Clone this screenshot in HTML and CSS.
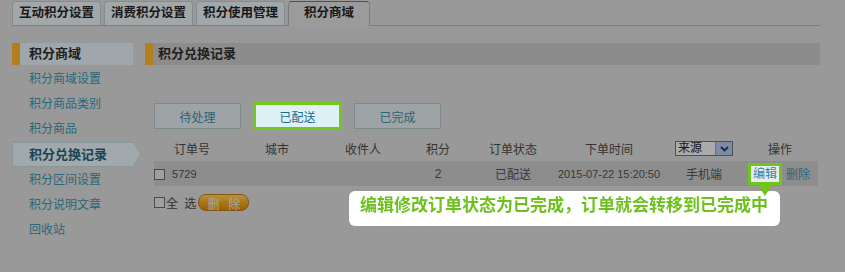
FILE: index.html
```html
<!DOCTYPE html>
<html>
<head>
    <title>积分商域 - 积分兑换记录</title>
    <link rel="stylesheet" href="styles.css">
</head>
<body>
    <div class="tabs">
        <a class="tab">互动积分设置</a>
        <a class="tab">消费积分设置</a>
        <a class="tab">积分使用管理</a>
        <a class="tab active">积分商域</a>
    </div>

    <div class="main">
        <div class="side">
            <div class="side-title">积分商域</div>
            <ul class="side-menu">
                <li><a>积分商域设置</a></li>
                <li><a>积分商品类别</a></li>
                <li><a>积分商品</a></li>
                <li class="current"><a>积分兑换记录</a></li>
                <li><a>积分区间设置</a></li>
                <li><a>积分说明文章</a></li>
                <li><a>回收站</a></li>
            </ul>
        </div>

        <div class="content">
            <div class="panel-title">积分兑换记录</div>

            <div class="status-tabs">
                <button class="status">待处理</button>
                <button class="status on hl">已配送</button>
                <button class="status">已完成</button>
            </div>

            <table class="orders">
                <colgroup>
                    <col style="width:76px"><col style="width:94px"><col style="width:78px"><col style="width:72px">
                    <col style="width:78px"><col style="width:114px"><col style="width:76px"><col style="width:76px">
                </colgroup>
                <thead>
                    <tr>
                        <th>订单号</th>
                        <th>城市</th>
                        <th>收件人</th>
                        <th>积分</th>
                        <th>订单状态</th>
                        <th>下单时间</th>
                        <th>
                            <span class="source">来源<i class="caret"><svg width="9" height="6" viewBox="0 0 9 6"><path d="M1 1 L4.5 4.5 L8 1" fill="none" stroke="#1d3c6e" stroke-width="1.8"/></svg></i></span>
                        </th>
                        <th>操作</th>
                    </tr>
                </thead>
                <tbody>
                    <tr>
                        <td class="num"><input type="checkbox" class="chk"> 5729</td>
                        <td></td>
                        <td></td>
                        <td>2</td>
                        <td>已配送</td>
                        <td class="num">2015-07-22 15:20:50</td>
                        <td>手机端</td>
                        <td class="ops"><a class="hl edit">编辑</a><a class="del">删除</a></td>
                    </tr>
                </tbody>
            </table>

            <div class="bulk">
                <input type="checkbox" class="chk"><span class="all">全 选</span>
                <button class="btn-del">删 除</button>
            </div>
        </div>
    </div>

    <!-- 引导遮罩 -->
    <div class="mask"></div>
    <div class="tip">编辑修改订单状态为已完成，订单就会转移到已完成中</div>
</body>
</html>
```

FILE: styles.css
```css
body {
    margin: 0;
    width: 845px;
    height: 272px;
    overflow: hidden;
    background: #dbdbdb;
    font: 12px "Liberation Sans", "Noto Sans CJK SC", sans-serif;
    color: #4d4d4d;
}

a { cursor: pointer; }

/* 顶部标签 */
.tabs {
    display: flex;
    gap: 3px;
    align-items: flex-end;
    margin-left: 12px;
    width: 808px;
    height: 25px;
    border-bottom: 1px solid #a9b8be;
}

.tab {
    height: 23px;
    line-height: 23px;
    padding: 0 6px;
    border: 1px solid #bccace;
    border-bottom: none;
    border-radius: 4px 4px 0 0;
    background: #e9eff2;
    font-size: 12.5px;
    font-weight: bold;
    color: #262626;
}

.tab.active {
    height: 24px;
    padding: 0 15px;
    margin-bottom: -1px;
    background: #dfdfdf;
    border-color: #a9b8be;
    border-top: 1px solid #62798a;
}

/* 主体 */
.main {
    display: flex;
    gap: 12px;
    margin: 17px 0 0 12px;
}

.side { width: 121px; }

.side-title {
    height: 22px;
    line-height: 22px;
    padding-left: 9px;
    border-left: 8px solid #ffb52c;
    background: #e4f0f6;
    font-size: 13px;
    font-weight: bold;
    color: #2e2e2e;
}

.side-menu {
    list-style: none;
    margin: 2px 0 0;
    padding: 0;
}

.side-menu li {
    height: 25px;
    line-height: 25px;
    padding-left: 17px;
}

.side-menu a { color: #3b95ae; font-size: 12px; }

.side-menu li.current {
    position: relative;
    height: 23px;
    line-height: 23px;
    margin: 0 0 1px;
    padding-left: 16px;
    border: 1px solid #c3d8e2;
    border-right: none;
    background: #e7f3f7;
}

.side-menu li.current::before,
.side-menu li.current::after {
    content: "";
    position: absolute;
    top: -1px;
    border-style: solid;
    border-color: transparent;
}

.side-menu li.current::before {
    right: -8px;
    border-width: 12.5px 0 12.5px 8px;
    border-left-color: #c3d8e2;
}

.side-menu li.current::after {
    right: -7px;
    top: 0;
    border-width: 11.5px 0 11.5px 7px;
    border-left-color: #e7f3f7;
}

.side-menu li.current a {
    font-size: 13px;
    font-weight: bold;
    color: #27627a;
}

/* 内容 */
.content { width: 675px; }

.panel-title {
    height: 22px;
    line-height: 22px;
    padding-left: 5px;
    border-left: 8px solid #ffb52c;
    background: #c9c9c9;
    font-size: 13px;
    font-weight: bold;
    color: #2e2e2e;
}

.status-tabs {
    display: flex;
    gap: 13px;
    margin: 38px 0 0 9px;
}

.status {
    width: 87px;
    height: 26px;
    border: 1px solid #b3c6cd;
    background: #e2eaed;
    font: 12px "Noto Sans CJK SC", sans-serif;
    color: #3f8fa8;
    padding: 0;
}

.status.on {
    width: 89px;
    height: 28px;
    margin: -1px;
    border: 3px solid #74c81c;
    background: #dcf2f7;
    color: #1c6a8c;
}

.hl {
    position: relative;
    z-index: 4;
}

.orders {
    width: 664px;
    margin: 7px 0 0 9px;
    border-collapse: collapse;
    table-layout: fixed;
}

.orders th {
    height: 25px;
    padding: 0;
    font-weight: normal;
    color: #4a4a4a;
}

.orders td {
    height: 25px;
    padding: 0;
    text-align: center;
    background: #cbcbcb;
    color: #525252;
}

.orders td.num { font-size: 11px; }

.orders td:first-child { text-align: left; }

.chk {
    appearance: none;
    width: 11px;
    height: 11px;
    margin: 0 4px 0 0;
    border: 1px solid #5e6f77;
    background: #e4e4e4;
    vertical-align: -2px;
}

.source {
    display: inline-flex;
    align-items: center;
    justify-content: space-between;
    width: 54px;
    height: 13px;
    padding-left: 2px;
    box-sizing: content-box;
    border: 1px solid #6e7478;
    background: #f5f5f5;
    color: #222;
    text-align: left;
    line-height: 13px;
}

.caret {
    display: flex;
    align-items: center;
    justify-content: center;
    width: 16px;
    height: 13px;
    background: #b5c7e8;
    border-left: 1px solid #8e9fbf;
}

.orders td.ops {
    text-align: left;
    padding-left: 6px;
}

.edit {
    display: inline-block;
    height: 16px;
    line-height: 16px;
    padding: 0 2px;
    border: 3px solid #70c41b;
    background: #e9eced;
    color: #2f86ad;
    vertical-align: middle;
}

.edit::after {
    content: "";
    position: absolute;
    left: 50%;
    top: calc(100% + 3px);
    margin-left: -7px;
    border-style: solid;
    border-width: 11px 7px 0 7px;
    border-color: #70c41b transparent transparent transparent;
}

.del {
    margin-left: 4px;
    color: #3b95b4;
    vertical-align: middle;
}

.bulk {
    display: flex;
    align-items: center;
    margin: 8px 0 0 9px;
    height: 17px;
}

.bulk .chk { margin: 0; }

.all { color: #4a4a4a; margin-left: 1px; word-spacing: 3px; }

.btn-del {
    width: 51px;
    height: 17px;
    margin-left: 2px;
    padding: 0;
    border: 1px solid #c57a0c;
    border-radius: 8px;
    background: linear-gradient(#ffd55a, #f2a51e 55%, #e08a0c);
    font: 12px "Noto Sans CJK SC", sans-serif;
    color: #f4eee0;
    word-spacing: 6px;
}

/* 遮罩与提示 */
.mask {
    position: fixed;
    inset: 0;
    z-index: 2;
    background: rgba(0, 0, 0, 0.3);
}

.tip {
    position: absolute;
    left: 349px;
    top: 191px;
    z-index: 3;
    width: 420px;
    height: 35px;
    line-height: 35px;
    padding-left: 11px;
    border-radius: 6px;
    background: #fff;
    font: bold 17px "Noto Sans CJK SC", sans-serif;
    color: #6cc11d;
    white-space: nowrap;
}
```
